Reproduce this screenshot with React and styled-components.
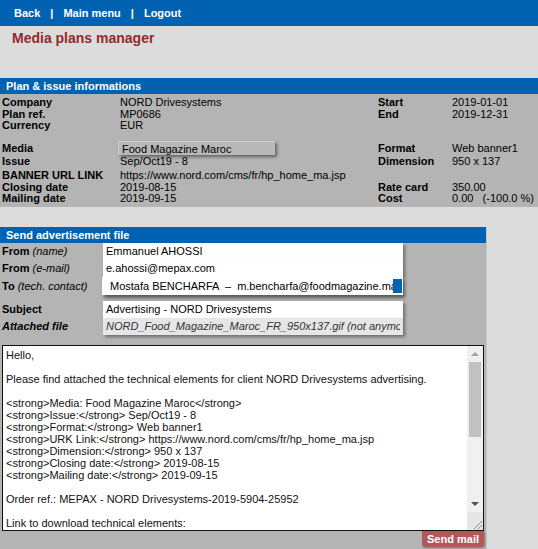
import React from 'react'
import styled, { createGlobalStyle } from 'styled-components'

const GlobalStyle = createGlobalStyle`
body {
  margin: 0;
  background-color: #dcdcdc;
  font-family: "Liberation Sans", Arial, sans-serif;
  font-size: 11px;
  color: #000;
}
`

const NavBar = styled.div`
height: 26px;
background-color: #0062b1;
display: flex;
align-items: center;
padding-left: 14px;
gap: 10px;
color: #fff;
font-weight: bold;
`

const NavLink = styled.a`
color: #fff;
text-decoration: none;
cursor: pointer;
`

const Title = styled.h1`
margin: 0;
height: 52px;
padding: 4px 0 0 12px;
box-sizing: border-box;
font-size: 14px;
line-height: 17px;
color: #922a2a;
`

const Panel = styled.div`
width: ${p => p.width || '100%'};
background-color: #b4b4b4;
box-sizing: border-box;
border-right: ${p => (p.width ? '1px solid #c6c6c6' : 'none')};
`

const PanelHeader = styled.div`
height: 16px;
line-height: 16px;
background-color: #0062b1;
color: #fff;
font-weight: bold;
padding-left: 6px;
`

const InfoBody = styled.div`
padding: 3px 0 2px 2px;
`

const InfoRow = styled.div`
display: grid;
grid-template-columns: 118px 258px 74px 1fr;
height: ${p => p.h || 11.5}px;
line-height: ${p => p.h || 11.5}px;
margin-top: ${p => p.mt || 0}px;
white-space: nowrap;
`

const Label = styled.span`
font-weight: bold;
`

const Value = styled.span``

const RaisedBox = styled.span`
display: block;
margin-left: -2px;
width: 157px;
padding-left: 3px;
box-sizing: border-box;
height: 14px;
line-height: 14px;
margin-top: 0.5px;
background-color: #b8b8b8;
border-top: 1px solid #cfcfcf;
border-left: 1px solid #cfcfcf;
box-shadow: 2px 2px 3px rgba(0, 0, 0, 0.45);
`

const Gap = styled.div`
height: ${p => p.h}px;
`

const MailBody = styled.div`
padding: 0 2px 2px 2px;
display: flex;
flex-direction: column;
`

const FormRow = styled.div`
display: grid;
grid-template-columns: 101px 300px;
align-items: center;
height: ${p => p.h || 17}px;
margin-top: ${p => p.mt || 0}px;
`

const FieldLabel = styled.span`
font-weight: bold;
white-space: nowrap;
em {
  font-weight: normal;
}
`

const Field = styled.input`
height: ${p => p.h || 17}px;
box-sizing: border-box;
width: 300px;
border: none;
outline: none;
margin: 0;
padding: 0 3px;
font-family: inherit;
font-size: 11px;
color: ${p => (p.muted ? '#333' : '#000')};
font-style: ${p => (p.muted ? 'italic' : 'normal')};
background-color: ${p => (p.muted ? '#e6e6e6' : '#fff')};
box-shadow: 2px 2px 3px rgba(0, 0, 0, 0.4);
`

const SelectBox = styled.div`
height: 18px;
width: 301px;
margin-left: -1px;
box-sizing: border-box;
background-color: #fff;
display: flex;
align-items: center;
box-shadow: 2px 3px 3px rgba(0, 0, 0, 0.5);
`

const SelectText = styled.div`
flex: 1;
padding-left: 8px;
overflow: hidden;
white-space: nowrap;
`

const SelectMark = styled.div`
width: 9px;
height: 14px;
margin-right: 1px;
background-color: #0062b1;
`

const TextFrame = styled.div`
margin-top: 10px;
height: 186px;
width: 482px;
box-sizing: border-box;
border: 1px solid #111;
background-color: #fff;
display: flex;
`

const MessageArea = styled.textarea`
flex: 1;
border: none;
outline: none;
resize: none;
overflow: hidden;
margin: 0;
padding: 3px 3px;
font-family: inherit;
font-size: 11px;
line-height: 12px;
color: #111;
background: transparent;
`

const ScrollBar = styled.div`
width: 16px;
display: flex;
flex-direction: column;
background-color: #f0f0f0;
`

const ScrollButton = styled.div`
height: 16px;
display: flex;
align-items: center;
justify-content: center;
&::before {
  content: '';
  border-left: 4px solid transparent;
  border-right: 4px solid transparent;
  border-${p => (p.down ? 'top' : 'bottom')}: 4px solid ${p => (p.down ? '#505050' : '#a3a3a3')};
}
`

const ScrollTrack = styled.div`
flex: 1;
padding: 0 2px;
`

const ScrollThumb = styled.div`
height: 75px;
background-color: #c1c1c1;
`

const Grip = styled.div`
height: 18px;
background-color: #e6e6e6;
display: flex;
align-items: flex-end;
justify-content: flex-end;
`

const Footer = styled.div`
display: flex;
justify-content: flex-end;
width: 482px;
`

const SendButton = styled.button`
height: 16px;
padding: 0 5px;
margin: 0;
border: none;
border-radius: 0 0 3px 3px;
background-color: #b3585a;
color: #fff;
font-family: inherit;
font-weight: bold;
font-size: 11px;
cursor: pointer;
box-shadow: 1px 1px 2px rgba(0, 0, 0, 0.3);
`

const message = `Hello,

Please find attached the technical elements for client NORD Drivesystems advertising.

<strong>Media: Food Magazine Maroc</strong>
<strong>Issue:</strong> Sep/Oct19 - 8
<strong>Format:</strong> Web banner1
<strong>URK Link:</strong> https://www.nord.com/cms/fr/hp_home_ma.jsp
<strong>Dimension:</strong> 950 x 137
<strong>Closing date:</strong> 2019-08-15
<strong>Mailing date:</strong> 2019-09-15

Order ref.: MEPAX - NORD Drivesystems-2019-5904-25952

Link to download technical elements:

https://www.mepax.com/download/NORD_Food_Magazine_Maroc_FR_950x137.gif

Thank you for confirming the good reception.

Best regards,

Emmanuel AHOSSI
MEPAX
e.ahossi@mepax.com
`

const infoRows = [
  { l: 'Company', v: 'NORD Drivesystems', rl: 'Start', rv: '2019-01-01' },
  { l: 'Plan ref.', v: 'MP0686', rl: 'End', rv: '2019-12-31' },
  { l: 'Currency', v: 'EUR' },
  { l: 'Media', v: 'Food Magazine Maroc', rl: 'Format', rv: 'Web banner1', box: true, h: 15, mt: 9 },
  { l: 'Issue', v: 'Sep/Oct19 - 8', rl: 'Dimension', rv: '950 x 137', mt: 0.75 },
  { l: 'BANNER URL LINK', v: 'https://www.nord.com/cms/fr/hp_home_ma.jsp', mt: 2.5 },
  { l: 'Closing date', v: '2019-08-15', rl: 'Rate card', rv: '350.00' },
  { l: 'Mailing date', v: '2019-09-15', rl: 'Cost', rv: '0.00\u00a0\u00a0\u00a0(-100.0 %)' },
]

const App = () => {
  return (
    <>
      <GlobalStyle />
      <NavBar>
        <NavLink>Back</NavLink>
        <span>|</span>
        <NavLink>Main menu</NavLink>
        <span>|</span>
        <NavLink>Logout</NavLink>
      </NavBar>
      <Title>Media plans manager</Title>

      <Panel>
        <PanelHeader>Plan &amp; issue informations</PanelHeader>
        <InfoBody>
          {infoRows.map(r => (
            <InfoRow key={r.l} h={r.h} mt={r.mt}>
              <Label>{r.l}</Label>
              {r.box ? <Value><RaisedBox>{r.v}</RaisedBox></Value> : <Value>{r.v}</Value>}
              <Label>{r.rl}</Label>
              <Value>{r.rv}</Value>
            </InfoRow>
          ))}
        </InfoBody>
      </Panel>

      <Gap h={20} />

      <Panel width="487px">
        <PanelHeader>Send advertisement file</PanelHeader>
        <MailBody>
          <FormRow>
            <FieldLabel>From <em>(name)</em></FieldLabel>
            <Field readOnly value="Emmanuel AHOSSI" />
          </FormRow>
          <FormRow>
            <FieldLabel>From <em>(e-mail)</em></FieldLabel>
            <Field readOnly value="e.ahossi@mepax.com" />
          </FormRow>
          <FormRow h={18}>
            <FieldLabel>To <em>(tech. contact)</em></FieldLabel>
            <SelectBox>
              <SelectText>Mostafa BENCHARFA &nbsp;–&nbsp; m.bencharfa@foodmagazine.ma</SelectText>
              <SelectMark />
            </SelectBox>
          </FormRow>
          <FormRow mt={6}>
            <FieldLabel>Subject</FieldLabel>
            <Field readOnly value="Advertising - NORD Drivesystems" />
          </FormRow>
          <FormRow>
            <FieldLabel><em style={{ fontWeight: 'bold' }}>Attached file</em></FieldLabel>
            <Field readOnly muted value="NORD_Food_Magazine_Maroc_FR_950x137.gif (not anymore available)" />
          </FormRow>

          <TextFrame>
            <MessageArea readOnly value={message} />
            <ScrollBar>
              <ScrollButton />
              <ScrollTrack>
                <ScrollThumb />
              </ScrollTrack>
              <ScrollButton down />
              <Grip>
                <svg width="14" height="14" viewBox="0 0 14 14">
                  <path d="M13 5 L5 13 M13 9 L9 13" stroke="#8a8a8a" strokeWidth="1" />
                </svg>
              </Grip>
            </ScrollBar>
          </TextFrame>
          <Footer>
            <SendButton>Send mail</SendButton>
          </Footer>
          <Gap h={8} />
        </MailBody>
      </Panel>
    </>
  )
}

export default App
